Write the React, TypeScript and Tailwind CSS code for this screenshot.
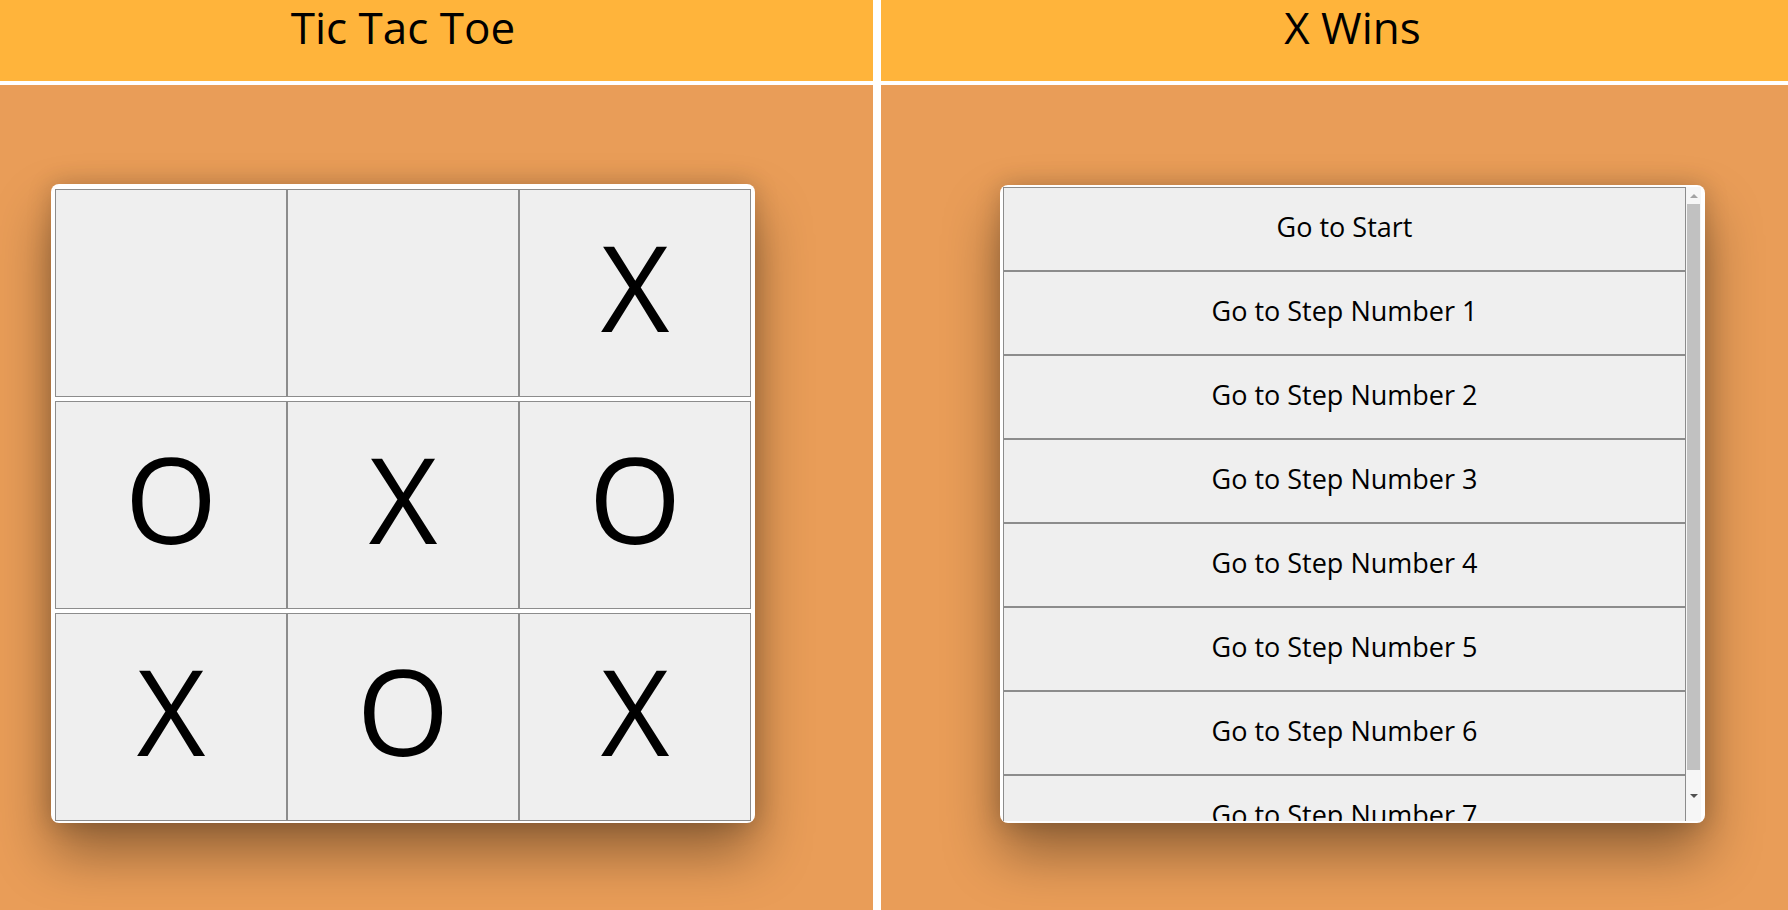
import React from "react"

const squares = ["", "", "X", "O", "X", "O", "X", "O", "X"]
const moves = ["Go to Start", ...Array.from({ length: 7 }, (_, i) => `Go to Step Number ${i + 1}`)]

function Square({ value }: { value: string }) {
  return (
    <button className="flex h-[208px] w-[232px] items-center justify-center border border-[#8c8c8c] bg-[#efefef] pb-[14px] text-[119px] leading-none text-black">
      {value}
    </button>
  )
}

// classic scrollbar look, drawn next to the clipped list
function ScrollBar() {
  return (
    <div className="flex w-[15px] flex-col items-center bg-[#f6f6f6]">
      <div className="flex h-[17px] items-center justify-center">
        <div className="h-0 w-0 border-x-[4px] border-b-[4px] border-x-transparent border-b-[#a3a3a3]" />
      </div>
      <div className="h-[566px] w-[13px] bg-[#c1c1c1]" />
      <div className="flex flex-1 items-center justify-center">
        <div className="h-0 w-0 border-x-[4px] border-t-[4px] border-x-transparent border-t-[#505050]" />
      </div>
    </div>
  )
}

export default function App() {
  return (
    <div className="flex h-screen w-full gap-[8px] overflow-hidden bg-white font-['Open_Sans',sans-serif] text-black">
      {/* Board column */}
      <div className="flex w-[873px] flex-col gap-[4px]">
        <div className="h-[81px] bg-[#ffb43b] pl-[51px]">
          <h1 className="w-[704px] text-center text-[44px] leading-[55px]">Tic Tac Toe</h1>
        </div>
        <div className="flex-1 bg-[#e99d58] pl-[51px] pt-[99px]">
          <div className="flex w-[704px] flex-col gap-[4px] rounded-[8px] bg-white px-[4px] pb-[2px] pt-[5px] shadow-[0_30px_55px_rgba(0,0,0,0.38),0_0_24px_rgba(0,0,0,0.18)]">
            {[0, 1, 2].map((row) => (
              <div key={row} className="flex">
                {squares.slice(row * 3, row * 3 + 3).map((v, i) => (
                  <Square key={i} value={v} />
                ))}
              </div>
            ))}
          </div>
        </div>
      </div>

      {/* History column */}
      <div className="flex flex-1 flex-col gap-[4px]">
        <div className="h-[81px] bg-[#ffb43b] pl-[119px]">
          <h1 className="w-[705px] text-center text-[44px] leading-[55px]">X Wins</h1>
        </div>
        <div className="flex-1 bg-[#e99d58] pl-[119px] pt-[100px]">
          <div className="flex h-[638px] w-[705px] rounded-[8px] bg-white pb-[2px] pl-[3px] pr-[4px] pt-[2px] shadow-[0_30px_55px_rgba(0,0,0,0.38),0_0_24px_rgba(0,0,0,0.18)]">
            <ol className="h-full flex-1 overflow-hidden">
              {moves.map((m) => (
                <li key={m}>
                  <button className="h-[84px] w-full border border-[#8c8c8c] bg-[#efefef] pb-[4px] text-[27px] text-black">
                    {m}
                  </button>
                </li>
              ))}
            </ol>
            <ScrollBar />
          </div>
        </div>
      </div>
    </div>
  )
}
